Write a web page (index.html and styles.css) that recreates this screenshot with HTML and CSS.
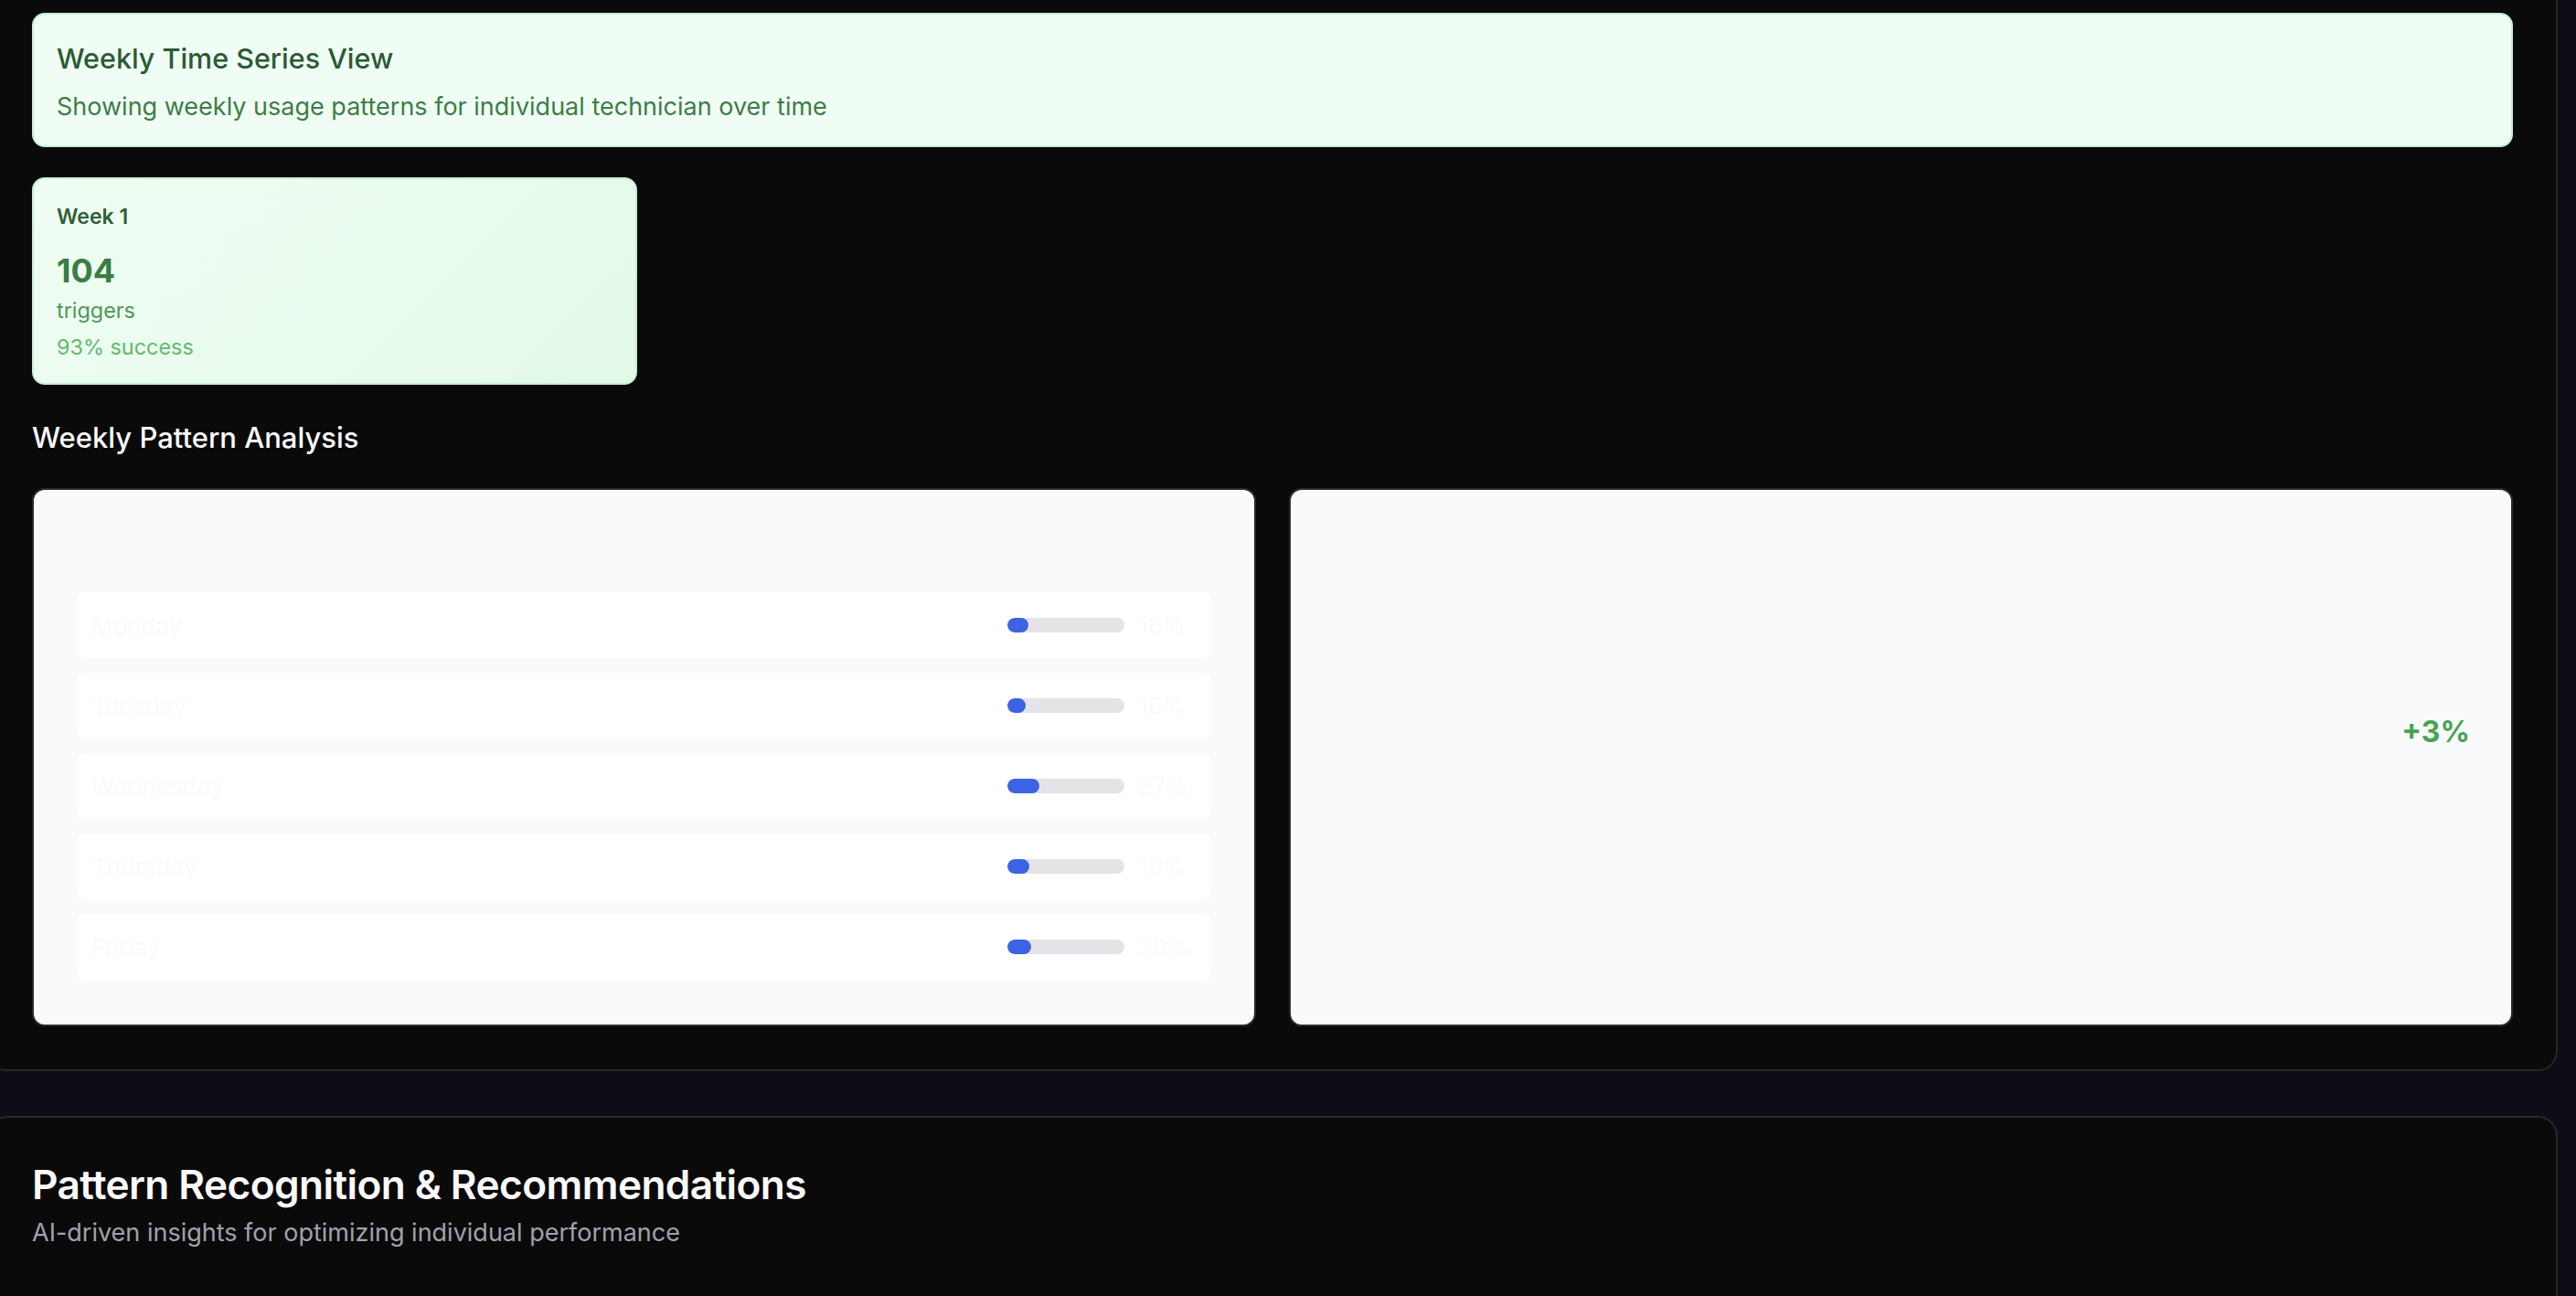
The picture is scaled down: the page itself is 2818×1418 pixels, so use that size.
FILE: index.html
```html
<!DOCTYPE html>
<html lang="en">
<head>
<meta charset="utf-8">
<title>Weekly Time Series View</title>
<link rel="stylesheet" href="styles.css">
</head>
<body>
<div class="page">
  <section class="card card-top">
    <div class="banner">
      <h2 class="banner-title">Weekly Time Series View</h2>
      <p class="banner-sub">Showing weekly usage patterns for individual technician over time</p>
    </div>

    <div class="weeks">
      <div class="week-card">
        <div class="week-label">Week 1</div>
        <div class="week-value">104</div>
        <div class="week-unit">triggers</div>
        <div class="week-success">93% success</div>
      </div>
    </div>

    <h3 class="section-title">Weekly Pattern Analysis</h3>

    <div class="panels">
      <div class="panel">
        <h4 class="panel-title">Day of Week Distribution</h4>
        <div class="day-list">
          <div class="day-row">
            <span class="day-name">Monday</span>
            <div class="track"><div class="fill" style="width:18%"></div></div>
            <span class="pct">18%</span>
          </div>
          <div class="day-row">
            <span class="day-name">Tuesday</span>
            <div class="track"><div class="fill" style="width:16%"></div></div>
            <span class="pct">16%</span>
          </div>
          <div class="day-row">
            <span class="day-name">Wednesday</span>
            <div class="track"><div class="fill" style="width:27%"></div></div>
            <span class="pct">27%</span>
          </div>
          <div class="day-row">
            <span class="day-name">Thursday</span>
            <div class="track"><div class="fill" style="width:19%"></div></div>
            <span class="pct">19%</span>
          </div>
          <div class="day-row">
            <span class="day-name">Friday</span>
            <div class="track"><div class="fill" style="width:20%"></div></div>
            <span class="pct">20%</span>
          </div>
        </div>
      </div>

      <div class="panel panel-right">
        <h4 class="panel-title">Weekly Insights</h4>
        <div class="insights">
          <div class="insight-row">
            <span class="insight-label">Highest Usage Day</span>
            <span class="insight-value">Wednesday</span>
          </div>
          <div class="insight-row">
            <span class="insight-label">Lowest Usage Day</span>
            <span class="insight-value">Tuesday</span>
          </div>
          <div class="insight-row">
            <span class="insight-label">Week-over-Week Trend</span>
            <span class="insight-value trend-up">+3%</span>
          </div>
        </div>
      </div>
    </div>
  </section>

  <section class="card card-bottom">
    <h2 class="big-title">Pattern Recognition &amp; Recommendations</h2>
    <p class="big-sub">AI-driven insights for optimizing individual performance</p>
  </section>
</div>
</body>
</html>
```

FILE: styles.css
```css
* {
  box-sizing: border-box;
}

html, body {
  margin: 0;
  padding: 0;
}

body {
  background: #0c0d16;
  font-family: Inter, "Noto Sans", "Liberation Sans", sans-serif;
  overflow: hidden;
  height: 1418px;
}

h2, h3, h4, p {
  margin: 0;
}

.page {
  margin-left: -14px;
  width: 2812px;
}

.card {
  background: #0a0a0b;
  border: 2px solid #27272c;
  border-radius: 22px;
  padding: 0 47px 47px 47px;
}

.card-top {
  margin-top: -40px;
  padding-top: 52px;
}

/* banner */
.banner {
  background: #f0fdf4;
  border: 2px solid #c6f1d2;
  border-radius: 14px;
  padding: 28px 25px 24px 25px;
}

.banner-title {
  font-size: 30.5px;
  line-height: 40px;
  font-weight: 500;
  color: #2b5a34;
}

.banner-sub {
  margin-top: 15px;
  font-size: 27px;
  line-height: 36px;
  color: #3d7d46;
}

/* week cards */
.weeks {
  margin-top: 33px;
  display: grid;
  grid-template-columns: repeat(4, 1fr);
  gap: 21.6px;
}

.week-card {
  height: 227px;
  background: linear-gradient(135deg, #f0fdf4 0%, #e2f9e7 100%);
  border: 2px solid #c8f0d2;
  border-radius: 14px;
  padding: 25px 25px 24px 25px;
}

.week-label {
  font-size: 23px;
  line-height: 32px;
  font-weight: 600;
  color: #2f5f38;
}

.week-value {
  margin-top: 21px;
  font-size: 36px;
  line-height: 44px;
  font-weight: 700;
  color: #3a7d45;
}

.week-unit {
  margin-top: 7px;
  font-size: 23.4px;
  line-height: 30px;
  color: #4b9a56;
}

.week-success {
  margin-top: 10px;
  font-size: 23.4px;
  line-height: 30px;
  color: #62bb6a;
}

/* section heading */
.section-title {
  margin-top: 36px;
  font-size: 31px;
  line-height: 44px;
  font-weight: 500;
  color: #fafafa;
}

/* panels */
.panels {
  margin-top: 33px;
  display: grid;
  grid-template-columns: 1fr 1fr;
  gap: 36px;
}

.panel {
  height: 589px;
  background: #f8fafc;
  border: 2px solid #2a2a30;
  border-radius: 14px;
  padding: 51px 47px 45px 47px;
}

.panel-title {
  font-size: 28px;
  line-height: 36px;
  font-weight: 600;
  color: #fafafa;
}

.day-list {
  margin-top: 25px;
  display: flex;
  flex-direction: column;
  gap: 16px;
}

.day-row {
  height: 72px;
  background: #ffffff;
  border-radius: 9px;
  display: flex;
  align-items: center;
  padding: 0 27px 0 16px;
}

.day-name {
  flex: 1;
  font-size: 26px;
  color: #fafafa;
}

.track {
  width: 128px;
  height: 16px;
  border-radius: 8px;
  background: #e4e4e8;
  overflow: hidden;
}

.fill {
  height: 100%;
  border-radius: 8px;
  background: #3b64e5;
}

.pct {
  width: 52px;
  margin-left: 16px;
  font-size: 25px;
  color: #fafafa;
}

.panel-right {
  padding: 48px 45px 45px 54px;
}

.insights {
  margin-top: 34px;
  display: flex;
  flex-direction: column;
  gap: 23px;
}

.insight-row {
  height: 40px;
  display: flex;
  align-items: center;
  justify-content: space-between;
}

.insight-label {
  font-size: 25px;
  color: #fafafa;
}

.insight-value {
  font-size: 25px;
  font-weight: 600;
  color: #fafafa;
}

.trend-up {
  font-size: 32px;
  font-weight: 700;
  color: #48a353;
}

/* bottom card */
.card-bottom {
  margin-top: 49px;
  min-height: 400px;
  padding-top: 46px;
}

.big-title {
  font-size: 44.2px;
  line-height: 54px;
  font-weight: 600;
  letter-spacing: -0.6px;
  color: #fafafa;
}

.big-sub {
  margin-top: 8px;
  font-size: 27px;
  line-height: 36px;
  color: #a1a1aa;
}
```
